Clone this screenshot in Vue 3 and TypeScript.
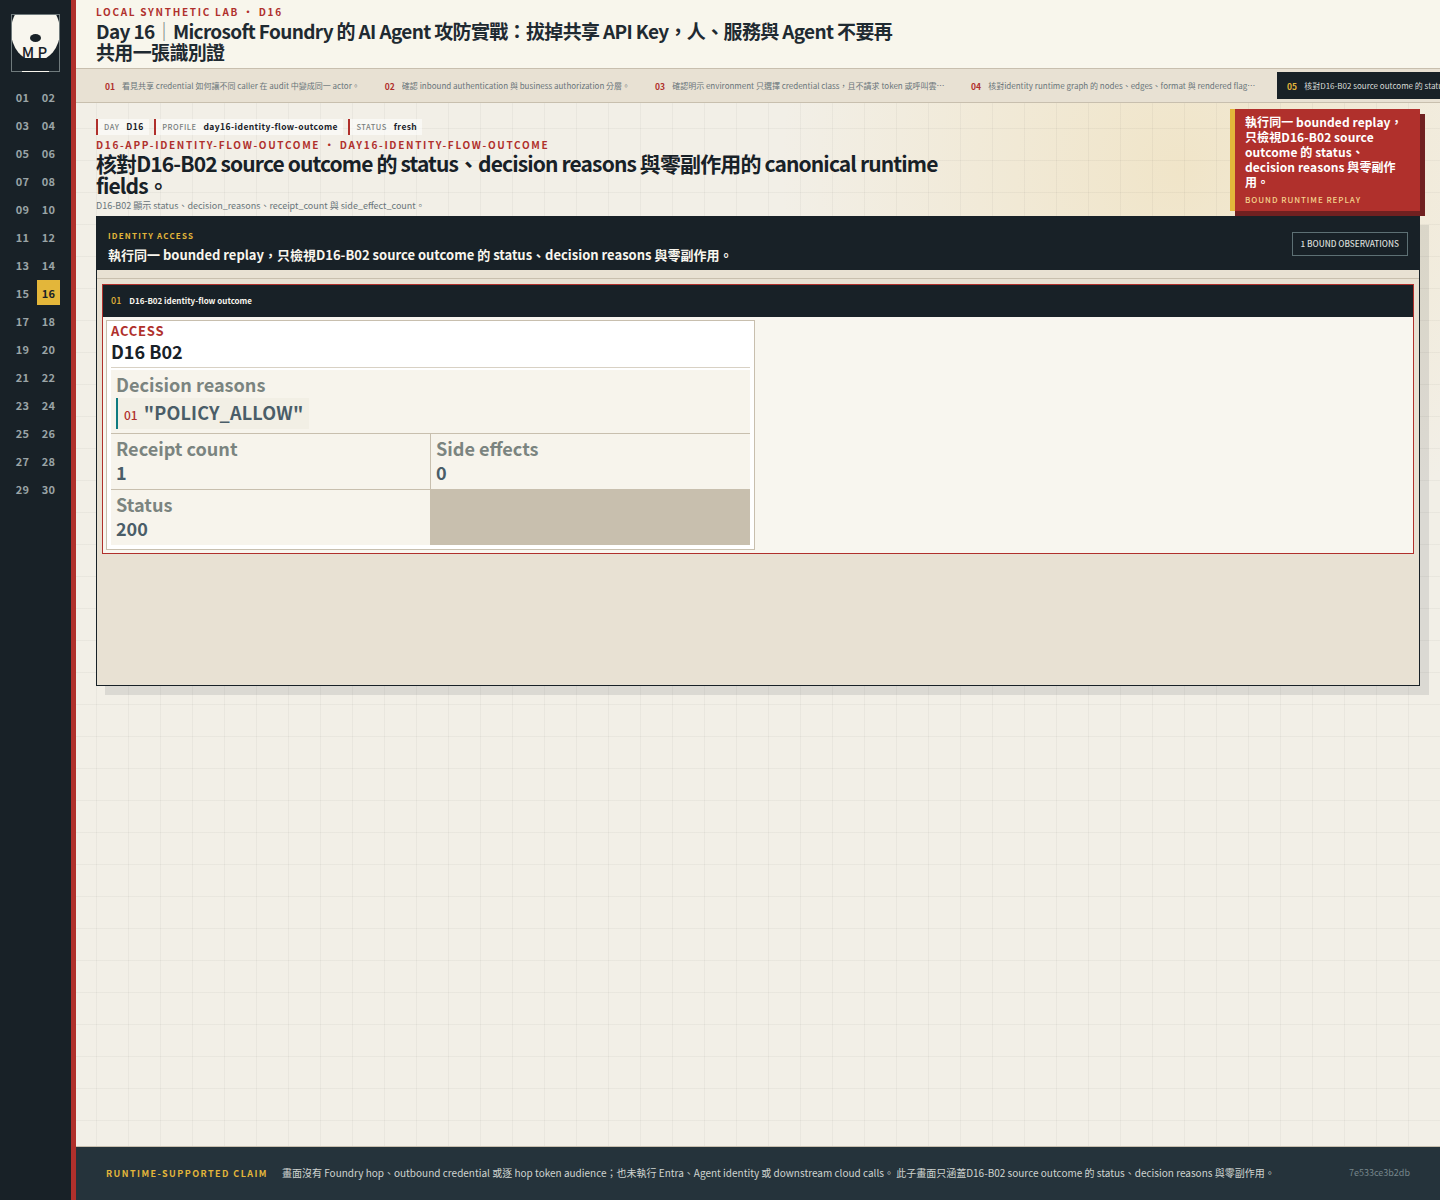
<template>
  <div class="shell">
    <aside class="rail">
      <div class="logo">
        <div class="logo-mark">
          <span class="logo-disc"></span>
          <span class="logo-eye"></span>
          <span class="logo-text">M P</span>
        </div>
        <span class="logo-line"></span>
      </div>
      <nav class="days">
        <span v-for="d in days" :key="d" class="day" :class="{ active: d === '16' }">{{ d }}</span>
      </nav>
    </aside>

    <div class="main">
      <header class="top">
        <div class="kicker">LOCAL SYNTHETIC LAB ・ D16</div>
        <h1 class="course">Day 16<span class="bar">｜</span>Microsoft Foundry 的 AI Agent 攻防實戰：拔掉共享 API Key，人、服務與 Agent 不要再共用一張識別證</h1>
      </header>

      <div class="strip">
        <div v-for="s in steps" :key="s.no" class="step" :class="{ current: s.current }">
          <b>{{ s.no }}</b>
          <span>{{ s.text }}</span>
        </div>
      </div>

      <section class="hero">
        <div class="hero-copy">
          <div class="chips">
            <div v-for="c in chips" :key="c.k" class="chip"><span>{{ c.k }}</span><strong>{{ c.v }}</strong></div>
          </div>
          <div class="route">D16-APP-IDENTITY-FLOW-OUTCOME ・ DAY16-IDENTITY-FLOW-OUTCOME</div>
          <h2>核對D16-B02 source outcome 的 status、decision reasons 與零副作用的 canonical runtime fields。</h2>
          <p>D16-B02 顯示 status、decision_reasons、receipt_count 與 side_effect_count。</p>
        </div>
        <div class="callout">
          <strong>執行同一 bounded replay，只檢視D16-B02 source outcome 的 status、decision reasons 與零副作用。</strong>
          <small>BOUND RUNTIME REPLAY</small>
        </div>
      </section>

      <section class="panel">
        <div class="panel-head">
          <div class="panel-copy">
            <div class="panel-tag">IDENTITY ACCESS</div>
            <div class="panel-title">執行同一 bounded replay，只檢視D16-B02 source outcome 的 status、decision reasons 與零副作用。</div>
          </div>
          <button type="button" class="obs">1 BOUND OBSERVATIONS</button>
        </div>
        <div class="panel-body">
          <div class="rule"></div>
          <article class="card">
            <div class="card-head"><b>01</b><span>D16-B02 identity-flow outcome</span></div>
            <div class="card-body">
              <div class="record">
                <div class="record-kind">ACCESS</div>
                <div class="record-id">D16 B02</div>
                <div class="fields">
                  <div class="field wide">
                    <div class="label">Decision reasons</div>
                    <div class="reason"><i>01</i><span>"POLICY_ALLOW"</span></div>
                  </div>
                  <div v-for="f in fields" :key="f.label" class="field">
                    <div class="label">{{ f.label }}</div>
                    <div class="value">{{ f.value }}</div>
                  </div>
                  <div class="filler"></div>
                </div>
              </div>
            </div>
          </article>
        </div>
      </section>

      <footer class="claim">
        <b>RUNTIME-SUPPORTED CLAIM</b>
        <span>畫面沒有 Foundry hop、outbound credential 或逐 hop token audience；也未執行 Entra、Agent identity 或 downstream cloud calls。 此子畫面只涵蓋D16-B02 source outcome 的 status、decision reasons 與零副作用。</span>
        <em>7e533ce3b2db</em>
      </footer>
    </div>
  </div>
</template>

<script setup lang="ts">
const days: string[] = Array.from({ length: 30 }, (_, i) => String(i + 1).padStart(2, '0'))

const steps = [
  { no: '01', text: '看見共享 credential 如何讓不同 caller 在 audit 中變成同一 actor。' },
  { no: '02', text: '確認 inbound authentication 與 business authorization 分層。' },
  { no: '03', text: '確認明示 environment 只選擇 credential class，且不請求 token 或呼叫雲端服務。' },
  { no: '04', text: '核對identity runtime graph 的 nodes、edges、format 與 rendered flags 的內容。' },
  { no: '05', text: '核對D16-B02 source outcome 的 status、decision reasons 與零副作用的 canonical runtime fields。', current: true },
]

const chips = [
  { k: 'DAY', v: 'D16' },
  { k: 'PROFILE', v: 'day16-identity-flow-outcome' },
  { k: 'STATUS', v: 'fresh' },
]

const fields = [
  { label: 'Receipt count', value: '1' },
  { label: 'Side effects', value: '0' },
  { label: 'Status', value: '200' },
]
</script>

<style>
html, body { margin: 0; background: #f2efe7; }
</style>

<style scoped>
.shell {
  display: flex;
  min-height: 1200px;
  font-family: "Noto Sans CJK TC", "Noto Sans", sans-serif;
  color: #182127;
  background-color: #f2efe7;
  background-image:
    linear-gradient(rgba(24, 33, 39, 0.045) 1px, transparent 1px),
    linear-gradient(90deg, rgba(24, 33, 39, 0.045) 1px, transparent 1px),
    radial-gradient(circle 400px at 1180px 170px, rgba(236, 205, 130, 0.3), transparent);
  background-size: 32px 32px, 32px 32px, auto;
}

.rail {
  width: 71px;
  flex-shrink: 0;
  box-sizing: border-box;
  padding: 14px 11px 0;
  background: #182127;
}

.logo {
  position: relative;
  height: 58px;
  box-sizing: border-box;
  border: 1px solid #6f7a7c;
}
.logo-mark {
  position: relative;
  height: 43px;
  overflow: hidden;
}
.logo-disc {
  position: absolute;
  left: -1px;
  top: -14px;
  width: 49px;
  height: 60px;
  border-radius: 50%;
  background: #f8f6ee;
}
.logo-eye {
  position: absolute;
  left: 18px;
  top: 19px;
  width: 11px;
  height: 8px;
  border-radius: 50%;
  background: #182127;
}
.logo-text {
  position: absolute;
  left: -2px;
  right: 0;
  top: 30px;
  text-align: center;
  font-size: 15px;
  line-height: 14px;
  font-weight: 500;
  color: #182127;
}
.logo-line {
  position: absolute;
  left: 10px;
  width: 27px;
  bottom: -1px;
  height: 1px;
  background: #f8f6ee;
}

.days {
  display: grid;
  grid-template-columns: 23px 23px;
  grid-auto-rows: 25px;
  gap: 3px;
  margin-top: 12px;
}
.day {
  display: flex;
  align-items: center;
  justify-content: center;
  font-size: 11px;
  font-weight: 700;
  letter-spacing: 0.3px;
  color: #9aa4a6;
}
.day.active { background: #e3b63a; color: #182127; }

.main {
  flex: 1;
  min-width: 0;
  display: flex;
  flex-direction: column;
  border-left: 5px solid #b0302c;
  overflow: hidden;
}

.top {
  height: 68px;
  box-sizing: border-box;
  padding: 5px 20px 0;
  background: #f8f6ec;
}
.kicker {
  font-size: 10px;
  line-height: 14px;
  font-weight: 700;
  letter-spacing: 1.7px;
  color: #b0302c;
}
.course {
  margin: 1px 0 0;
  max-width: 810px;
  font-size: 19px;
  line-height: 21px;
  font-weight: 700;
  letter-spacing: -0.65px;
  color: #1f2a31;
}
.bar { color: #6f7a7c; font-weight: 400; }

.strip {
  display: flex;
  gap: 5px;
  align-items: center;
  height: 35px;
  box-sizing: border-box;
  padding: 0 0 0 19px;
  background: #e8e1d3;
  border-top: 1px solid #c8bfae;
  border-bottom: 1px solid #c8bfae;
  overflow: hidden;
}
.step {
  display: flex;
  align-items: center;
  flex-shrink: 0;
  gap: 7px;
  height: 27px;
  max-width: 311px;
  box-sizing: border-box;
  padding: 0 10px;
  font-size: 8px;
  color: #69757a;
  white-space: nowrap;
}
.step:nth-child(4) { max-width: 307px; margin-right: 4px; }
.step b { font-size: 8.5px; color: #b0302c; font-weight: 700; }
.step span { overflow: hidden; text-overflow: ellipsis; }
.step.current { background: #182127; color: #d9dcd8; max-width: none; }
.step.current b { color: #e3b63a; }

.hero {
  display: flex;
  justify-content: space-between;
  height: 113px;
  box-sizing: border-box;
  padding: 6px 20px 0;
}
.hero-copy { width: 860px; padding-top: 10px; }
.chips { display: flex; gap: 5.5px; }
.chip {
  display: flex;
  align-items: center;
  gap: 7px;
  height: 16px;
  padding: 0 5px 2px 6px;
  box-sizing: border-box;
  border-left: 2px solid #b0302c;
  background: rgba(255, 255, 255, 0.55);
  font-size: 7.5px;
  font-weight: 500;
  letter-spacing: 0.5px;
  color: #7a7f7e;
}
.chip strong { font-size: 8.5px; font-weight: 700; color: #182127; letter-spacing: 0.42px; }
.route {
  margin-top: 3px;
  font-size: 10px;
  line-height: 14px;
  font-weight: 700;
  letter-spacing: 1.68px;
  color: #b0302c;
  white-space: nowrap;
}
.hero h2 {
  margin: 0;
  font-size: 21px;
  line-height: 22px;
  font-weight: 700;
  letter-spacing: -0.88px;
  color: #182127;
}
.hero p {
  margin: 3px 0 0;
  font-size: 9px;
  line-height: 13px;
  color: #69757a;
}
.callout {
  align-self: flex-start;
  width: 190px;
  height: 102px;
  box-sizing: border-box;
  padding: 5px 17px 0 10px;
  background: #b0302c;
  border-left: 5px solid #e3b63a;
  box-shadow: 5px 5px 0 #702020;
  color: #fff;
}
.callout strong {
  display: block;
  font-size: 12px;
  line-height: 15px;
  font-weight: 700;
  letter-spacing: 0.08px;
}
.callout small {
  display: block;
  margin-top: 5px;
  font-size: 8px;
  line-height: 12px;
  font-weight: 500;
  letter-spacing: 0.95px;
  color: #f5d38c;
}

.panel {
  width: 1324px;
  height: 470px;
  margin-left: 20px;
  box-sizing: border-box;
  display: flex;
  flex-direction: column;
  background: #e8e1d3;
  border: 1px solid #182127;
  border-top: 0;
  box-shadow: 9px 9px 0 rgba(24, 33, 39, 0.1);
}
.panel-head {
  display: flex;
  align-items: center;
  justify-content: space-between;
  height: 54px;
  flex-shrink: 0;
  box-sizing: border-box;
  padding: 0 11px;
  background: #182127;
  color: #fff;
}
.panel-copy { align-self: flex-start; padding-top: 14px; }
.panel-tag {
  font-size: 8px;
  line-height: 12px;
  font-weight: 700;
  letter-spacing: 1.2px;
  color: #e3b63a;
}
.panel-title {
  margin-top: 4px;
  font-size: 13px;
  line-height: 18px;
  font-weight: 700;
  color: #f8f6ee;
}
.obs {
  height: 24px;
  margin-top: 1px;
  padding: 0 8px 2px;
  background: transparent;
  border: 1px solid #5d7074;
  font-family: inherit;
  font-size: 8.2px;
  font-weight: 500;
  color: #d9dcd8;
}
.panel-body { flex: 1; padding: 8px 5px 0; }
.rule { height: 1px; background: #c8bfae; margin: 0 -5px 5px; }

.card {
  height: 270px;
  box-sizing: border-box;
  border: 1px solid #b0302c;
  background: #f8f6ef;
}
.card-head {
  display: flex;
  align-items: center;
  gap: 8px;
  height: 32px;
  box-sizing: border-box;
  padding: 0 8px 2px;
  background: #182127;
  font-size: 8px;
  font-weight: 700;
  color: #f8f6ee;
}
.card-head b { font-size: 9px; font-weight: 500; color: #e3b63a; }
.card-body { padding: 3px; }
.record {
  width: 649px;
  height: 230px;
  box-sizing: border-box;
  padding: 2px 4px;
  background: #fff;
  border: 1px solid #c8bfae;
}
.record-kind {
  font-size: 13px;
  line-height: 15px;
  font-weight: 700;
  letter-spacing: 0.78px;
  color: #b0302c;
}
.record-id {
  font-size: 18px;
  line-height: 26px;
  padding-bottom: 3px;
  font-weight: 700;
  color: #182127;
  border-bottom: 1px solid #d8d1c4;
}
.fields {
  display: grid;
  grid-template-columns: 1fr 1fr;
  gap: 1px;
  margin-top: 2px;
  background: #c8bfae;
}
.field {
  height: 55px;
  box-sizing: border-box;
  padding: 2px 5px;
  background: #f7f4ec;
}
.field.wide { grid-column: 1 / -1; height: 63px; }
.label {
  font-size: 18.1px;
  line-height: 25px;
  font-weight: 700;
  color: #7b8480;
}
.value {
  font-size: 18px;
  line-height: 23px;
  font-weight: 700;
  color: #4a5d68;
}
.reason {
  display: inline-flex;
  align-items: center;
  gap: 6px;
  height: 31px;
  margin-top: 1px;
  padding: 0 6px;
  border-left: 2px solid #0f7b80;
  background: #f2efe5;
}
.reason i {
  margin-top: 2px;
  font-style: normal;
  font-size: 12px;
  font-weight: 500;
  color: #b0302c;
}
.reason span {
  margin-bottom: 4px;
  font-size: 18px;
  font-weight: 700;
  letter-spacing: 0.2px;
  color: #4a5d68;
}
.filler { background: #c8bfae; }

.claim {
  display: flex;
  align-items: center;
  height: 54px;
  margin-top: auto;
  box-sizing: border-box;
  padding: 0 30px 2px;
  background: #25333b;
  border-top: 1px solid #c8bfae;
  font-size: 10px;
  white-space: nowrap;
  color: #cfd4d0;
}
.claim b {
  margin-top: 2px;
  margin-right: 14px;
  font-size: 9px;
  font-weight: 700;
  letter-spacing: 1.44px;
  color: #e3b63a;
}
.claim em {
  margin-left: auto;
  font-style: normal;
  font-size: 9px;
  color: #75858a;
}
</style>
